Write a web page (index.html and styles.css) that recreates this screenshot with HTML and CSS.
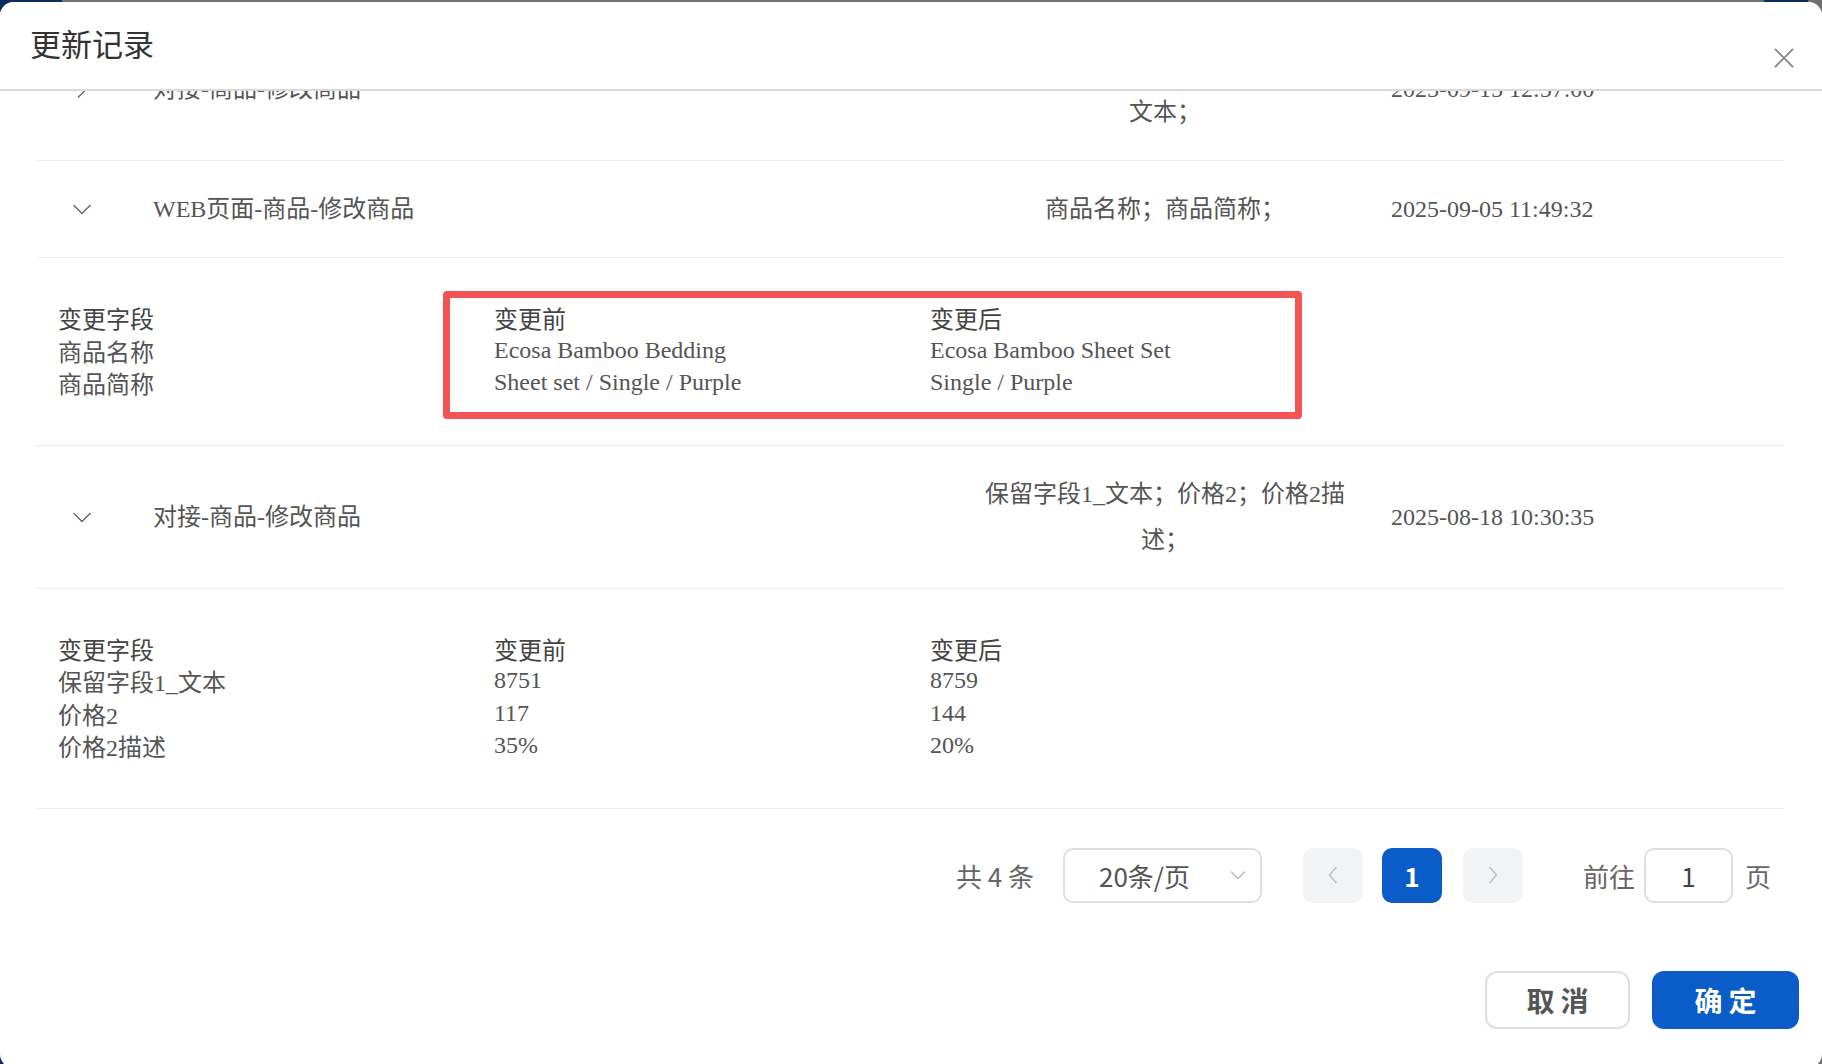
FILE: index.html
```html
<!DOCTYPE html>
<html lang="zh-CN">
<head>
<meta charset="utf-8">
<title>更新记录</title>
<link rel="stylesheet" href="styles.css">
</head>
<body>
<div class="modal">
  <div class="modal-header">
    <h2 class="title">更新记录</h2>
    <button class="close" aria-label="关闭">
      <svg width="20" height="20" viewBox="0 0 20 20"><path d="M1 1L19 19M19 1L1 19" stroke="#8a8a8a" stroke-width="1.8" fill="none"/></svg>
    </button>
  </div>
  <div class="modal-body">
    <div class="list">
      <div class="row">
        <span class="chev"><svg width="18" height="18" viewBox="0 0 18 18"><path d="M5 0.5L13.5 9L5 17.5" stroke="#666" stroke-width="1.4" fill="none"/></svg></span>
        <span class="name">对接-商品-修改商品</span>
        <span class="desc">保留字段1_文本；价格1；价格1_<br>文本；</span>
        <span class="date">2025-09-15 12:57:00</span>
      </div>
      <div class="row">
        <span class="chev"><svg width="18" height="18" viewBox="0 0 18 18"><path d="M0.5 5L9 13.5L17.5 5" stroke="#666" stroke-width="1.4" fill="none"/></svg></span>
        <span class="name">WEB页面-商品-修改商品</span>
        <span class="desc">商品名称；商品简称；</span>
        <span class="date">2025-09-05 11:49:32</span>
      </div>
      <div class="detail">
        <div class="col">
          <div class="head">变更字段</div>
          <div>商品名称</div>
          <div>商品简称</div>
        </div>
        <div class="col">
          <div class="head">变更前</div>
          <div>Ecosa Bamboo Bedding</div>
          <div>Sheet set / Single / Purple</div>
        </div>
        <div class="col">
          <div class="head">变更后</div>
          <div>Ecosa Bamboo Sheet Set</div>
          <div>Single / Purple</div>
        </div>
      </div>
      <div class="row">
        <span class="chev"><svg width="18" height="18" viewBox="0 0 18 18"><path d="M0.5 5L9 13.5L17.5 5" stroke="#666" stroke-width="1.4" fill="none"/></svg></span>
        <span class="name">对接-商品-修改商品</span>
        <span class="desc">保留字段1_文本；价格2；价格2描<br>述；</span>
        <span class="date">2025-08-18 10:30:35</span>
      </div>
      <div class="detail">
        <div class="col">
          <div class="head">变更字段</div>
          <div>保留字段1_文本</div>
          <div>价格2</div>
          <div>价格2描述</div>
        </div>
        <div class="col">
          <div class="head">变更前</div>
          <div>8751</div>
          <div>117</div>
          <div>35%</div>
        </div>
        <div class="col">
          <div class="head">变更后</div>
          <div>8759</div>
          <div>144</div>
          <div>20%</div>
        </div>
      </div>
    </div>
    <div class="pagination">
      <span class="total">共 4 条</span>
      <div class="select">
        <span>20条/页</span>
        <svg class="select-arrow" width="16" height="10" viewBox="0 0 16 10"><path d="M1 1.5L8 8.5L15 1.5" stroke="#b4b8c0" stroke-width="1.3" fill="none"/></svg>
      </div>
      <button class="pg-btn prev"><svg width="10" height="18" viewBox="0 0 10 18"><path d="M8.5 1L1.5 9L8.5 17" stroke="#b8bcc4" stroke-width="1.4" fill="none"/></svg></button>
      <button class="pg-btn active">1</button>
      <button class="pg-btn next"><svg width="10" height="18" viewBox="0 0 10 18"><path d="M1.5 1L8.5 9L1.5 17" stroke="#b8bcc4" stroke-width="1.4" fill="none"/></svg></button>
      <span class="goto">前往</span>
      <div class="jump">1</div>
      <span class="page-unit">页</span>
    </div>
  </div>
  <div class="modal-footer">
    <button class="btn btn-cancel">取消</button>
    <button class="btn btn-ok">确定</button>
  </div>
</div>
<div class="highlight"></div>
</body>
</html>
```
FILE: styles.css
```css
html, body {
  margin: 0;
  padding: 0;
}
body {
  width: 1822px;
  height: 1064px;
  overflow: hidden;
  position: relative;
  background: linear-gradient(to right, #0c2d5e 0, #0c2d5e 62px, #707070 62px, #707070 1764px, #0c2d5e 1764px, #0c2d5e 1808px, #707070 1808px);
  font-family: "Liberation Serif", "Noto Sans CJK SC", serif;
}
.modal {
  margin-top: 2px;
  height: 1066px;
  background: #fff;
  border-radius: 14px;
  display: flex;
  flex-direction: column;
  overflow: hidden;
}
.modal-header {
  height: 87px;
  flex: none;
  border-bottom: 2px solid #d9d9d9;
  display: flex;
  justify-content: space-between;
  align-items: flex-start;
  padding: 0 28px 0 30px;
  background: #fff;
  position: relative;
  z-index: 2;
}
.title {
  margin: 28px 0 0 0;
  font-size: 31px;
  line-height: 32px;
  font-weight: normal;
  color: #333;
}
.close {
  margin-top: 46px;
  width: 20px;
  height: 20px;
  padding: 0;
  border: 0;
  background: none;
  display: block;
}
.close svg { display: block; }
.modal-body {
  flex: 1;
  overflow: hidden;
  padding: 0 38px 0 37px;
}
.list {
  margin-top: -73px;
}
.row {
  display: grid;
  grid-template-columns: 116px 827px 370px 1fr;
  align-items: center;
  padding: 25px 0;
  border-bottom: 1px solid #e9ecf1;
  color: #555;
  font-size: 24px;
  line-height: 46px;
}
.chev {
  margin-left: 36px;
  width: 18px;
  height: 18px;
}
.chev svg { display: block; }
.desc {
  text-align: center;
}
.date {
  padding-left: 41px;
}
.detail {
  display: grid;
  grid-template-columns: 436px 436px 1fr;
  padding: 46px 0 43px 21px;
  border-bottom: 1px solid #e9ecf1;
  color: #555;
  font-size: 24px;
  line-height: 32.5px;
}
.detail .head {
  color: #444;
}
.detail .col + .col .head {
  margin-bottom: -3px;
}
.pagination {
  display: flex;
  align-items: center;
  justify-content: flex-end;
  margin-top: 39px;
  padding-right: 13px;
  height: 55px;
  font-family: "Noto Sans CJK SC", sans-serif;
  font-size: 26px;
  color: #666;
}
.total {
  margin-right: 29px;
}
.select {
  width: 199px;
  height: 55px;
  box-sizing: border-box;
  border: 2px solid #dcdfe6;
  border-radius: 10px;
  display: flex;
  align-items: center;
  padding: 0 14px 0 34px;
  color: #555;
  margin-right: 41px;
}
.select-arrow {
  margin-left: auto;
}
.pg-btn {
  width: 60px;
  height: 55px;
  border: 0;
  border-radius: 10px;
  background: #f2f3f5;
  display: flex;
  align-items: center;
  justify-content: center;
  padding: 0;
  font-family: "Noto Sans CJK SC", sans-serif;
  font-size: 26px;
}
.pg-btn.prev { margin-right: 19px; }
.pg-btn.active {
  background: #0a5cc8;
  color: #fff;
  font-weight: bold;
  margin-right: 21px;
}
.pg-btn.next { margin-right: 60px; }
.goto { margin-right: 9px; }
.jump {
  width: 89px;
  height: 55px;
  box-sizing: border-box;
  border: 2px solid #dcdfe6;
  border-radius: 10px;
  display: flex;
  align-items: center;
  justify-content: center;
  color: #444;
  margin-right: 12px;
}
.modal-footer {
  flex: none;
  display: flex;
  justify-content: flex-end;
  gap: 22px;
  padding: 0 23px 39px 0;
}
.btn {
  height: 58px;
  border-radius: 12px;
  font-family: "Noto Sans CJK SC", sans-serif;
  font-size: 28px;
  font-weight: bold;
  letter-spacing: 6px;
  padding: 0 0 0 6px;
  box-sizing: border-box;
  display: flex;
  align-items: center;
  justify-content: center;
}
.btn-cancel {
  width: 145px;
  background: #fff;
  border: 2px solid #dcdfe6;
  color: #555;
}
.btn-ok {
  width: 147px;
  background: #0a5cc8;
  border: 0;
  color: #fff;
}
.highlight {
  position: absolute;
  left: 443px;
  top: 291px;
  width: 859px;
  height: 128px;
  box-sizing: border-box;
  border: 7px solid #f45454;
  border-radius: 4px;
  pointer-events: none;
}
```
